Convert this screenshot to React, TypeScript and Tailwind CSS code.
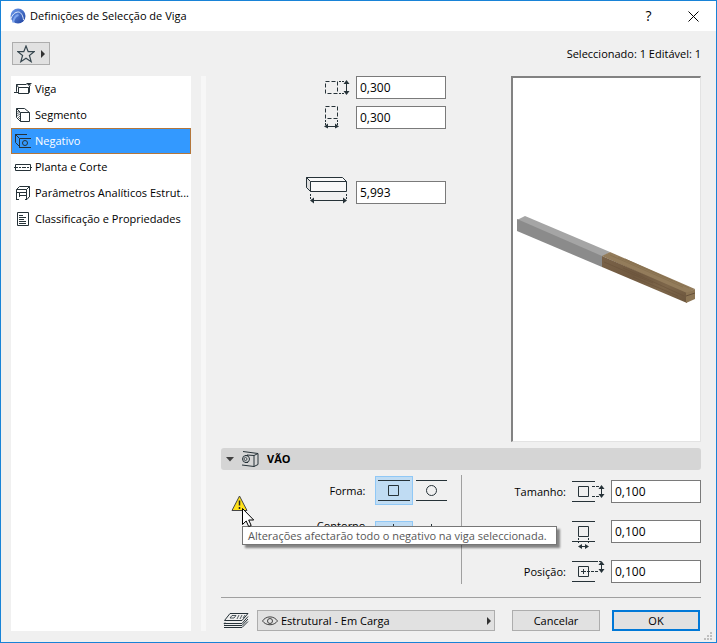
import { useState } from "react";
import type { ReactNode } from "react";

const INK = "#263238";

function Svg({ w, h, className, children }: { w: number; h: number; className?: string; children: ReactNode }) {
    return (
        <svg width={w} height={h} viewBox={`0 0 ${w} ${h}`} fill="none" stroke={INK} className={`shrink-0 ${className ?? ""}`} aria-hidden="true">
            {children}
        </svg>
    );
}

const menu = [
    {
        id: "viga",
        label: "Viga",
        icon: (
            <Svg w={18} h={16}>
                <path d="M4.5 6.5h10v6h-10zM4.5 6.5l-2-3h10M2.5 3.5v7l2 2M0 11.5h3M14.5 6.5l2-2M14.5 12.5l1-1v-6" />
                <path d="M12 2h6l-3 3z" fill={INK} stroke="none" />
            </Svg>
        ),
    },
    {
        id: "segmento",
        label: "Segmento",
        icon: (
            <Svg w={18} h={16}>
                <path d="M6.5 5.5h9v9h-9zM6.5 5.5l-4-4h8l5 4M2.5 1.5v9l4 4" />
                <path d="M3 5l2-1M3 7l3-2M3 9l3-2M4 11l2-2M5 12l1-1" strokeWidth=".7" />
            </Svg>
        ),
    },
    {
        id: "negativo",
        label: "Negativo",
        icon: (
            <Svg w={18} h={16}>
                <path d="M1 1.5h12M5.5 5.5H17M5.5 5.5l-4-4v8l4 4zM5.5 14.5H17M5.5 13v2" />
                <circle cx="11" cy="10" r="2.5" />
            </Svg>
        ),
    },
    {
        id: "planta",
        label: "Planta e Corte",
        icon: (
            <Svg w={18} h={16}>
                <path d="M1.5 5.5h15v6h-15z" />
                <path d="M0 8.5h18" strokeDasharray="4 1 2 1" />
            </Svg>
        ),
    },
    {
        id: "parametros",
        label: "Parâmetros Analíticos Estrut...",
        icon: (
            <Svg w={18} h={16}>
                <path d="M2.5 15V4.5l3-3h10V12M2.5 4.5h10l3-3M5.5 12V7.5h7M12.5 4.5V15M2 14.5h3M11 14.5h2l2-2.5M2.5 7.5h3M5.5 10.5h7" />
            </Svg>
        ),
    },
    {
        id: "classificacao",
        label: "Classificação e Propriedades",
        icon: (
            <Svg w={18} h={16}>
                <path d="M3.5 1.5h11v13h-11zM5 4.5h4M5 6.5h7M5 8.5h5M5 10.5h7M5 12.5h7" />
            </Svg>
        ),
    },
];

const inputClass = "w-[90px] h-[23px] shrink-0 border border-[#7a7a7a] bg-white px-[3px] text-[12px] text-black outline-none";

function SizeField({ label, value, icon }: { label: string; value: string; icon: ReactNode }) {
    return (
        <label className="flex items-center gap-[6px]">
            {icon}
            <input aria-label={label} defaultValue={value} className={inputClass} />
        </label>
    );
}

function HoleField({ label, name, value, icon }: { label: string; name: string; value: string; icon: ReactNode }) {
    return (
        <label className="flex h-[23px] items-center gap-[6px]">
            <span className="flex-1 text-right">{label}</span>
            {icon}
            <input aria-label={name} defaultValue={value} className={inputClass} />
        </label>
    );
}

export default function App() {
    const [active, setActive] = useState("negativo");
    const [shape, setShape] = useState("rect");

    return (
        <div className="flex min-h-screen flex-col border border-[#1883d7] bg-[#f0f0f0] font-['Open_Sans','Noto_Sans',sans-serif] text-[11px] leading-[16px] text-black">
            <header className="flex h-[30px] items-center bg-white pl-2">
                <svg width="17" height="17" viewBox="0 0 17 17" aria-hidden="true">
                    <defs>
                        <linearGradient id="logo" x1="0" y1="0" x2="1" y2="1">
                            <stop offset="0" stopColor="#6d9cf0" />
                            <stop offset="1" stopColor="#1c3f9c" />
                        </linearGradient>
                    </defs>
                    <circle cx="9" cy="8" r="7.5" fill="url(#logo)" />
                    <path d="M1.500 12C3 6.500 6 4 9.500 4C12.500 4.500 14 8 14.500 12" fill="none" stroke="#dfe9fb" strokeWidth="1" />
                    <path d="M4 14.500C5 10 7 7.500 9.500 7" fill="none" stroke="#7ea5ee" strokeWidth="2" />
                </svg>
                <h1 className="ml-1 flex-1">Definições de Selecção de Viga</h1>
                <button aria-label="Ajuda" className="h-full w-[45px] text-[14px]">?</button>
                <button aria-label="Fechar" className="flex h-full w-[45px] items-center justify-center">
                    <svg width="11" height="11" viewBox="0 0 11 11" stroke="#000" aria-hidden="true">
                        <path d="M.5.5l10 10M10.500.5l-10 10" />
                    </svg>
                </button>
            </header>

            <div className="flex h-[45px] items-center justify-between pl-[11px] pr-[15px]">
                <button aria-label="Favoritos" className="flex h-[23px] w-[38px] items-center justify-center gap-[6px] border border-[#adadad] bg-[#e1e1e1]">
                    <Svg w={18} h={18}>
                        <path d="M9 1l2.200 5.700h6l-4.800 3.800 1.800 6.200L9 13.200l-5.200 3.500 1.800-6.200L.8 6.700h6z" stroke="#37474f" strokeWidth="1.2" />
                    </Svg>
                    <Svg w={4} h={8}>
                        <path d="M0 0l4 4-4 4z" fill="#333" stroke="none" />
                    </Svg>
                </button>
                <p>Seleccionado: 1 Editável: 1</p>
            </div>

            <div className="flex flex-1 pb-[11px] pl-[10px] pr-[15px]">
                <nav className="w-[180px] shrink-0 bg-white">
                    {menu.map((item) => (
                        <button
                            key={item.id}
                            onClick={() => setActive(item.id)}
                            className={`flex h-[26px] w-full items-center gap-[3px] border pl-[2px] text-left whitespace-nowrap ${
                                active === item.id ? "border-[#b3763b] bg-[#3399ff] text-white" : "border-transparent"
                            }`}
                        >
                            {item.icon}
                            {item.label}
                        </button>
                    ))}
                </nav>
                <div className="ml-[10px] mr-[15px] w-[5px] shrink-0 bg-[#f7f7f7]" />

                <main className="flex min-w-0 flex-1 flex-col">
                    <section className="flex min-h-[240px] flex-1">
                        <div className="flex flex-1 flex-col items-end pr-[65px]">
                            <SizeField
                                label="Altura"
                                value="0,300"
                                icon={
                                    <Svg w={45} h={23}>
                                        <path d="M20.500 5.500h12v12h-12z" strokeDasharray="4 2" />
                                        <path d="M34 5.500h6M34 17.500h6" strokeDasharray="2 1" />
                                        <path d="M41.500 7v9" />
                                        <path d="M41.500 4l3 4h-6zM41.500 19l3-4h-6z" fill={INK} stroke="none" />
                                    </Svg>
                                }
                            />
                            <div className="mt-[7px]">
                                <SizeField
                                    label="Largura"
                                    value="0,300"
                                    icon={
                                        <Svg w={45} h={23}>
                                            <path d="M20.500.5h12v12h-12z" strokeDasharray="4 2" />
                                            <path d="M20.500 14v6M32.500 14v6" strokeDasharray="2 1" />
                                            <path d="M22 20.500h9" />
                                            <path d="M19 20.500l4-3v5zM34 20.500l-4-3v5z" fill={INK} stroke="none" />
                                        </Svg>
                                    }
                                />
                            </div>
                            <div className="mt-12">
                                <SizeField
                                    label="Comprimento"
                                    value="5,993"
                                    icon={
                                        <Svg w={45} h={31}>
                                            <path d="M1.500.5h36l4 4v10h-36l-4-4z" fill="#f8f8f8" />
                                            <path d="M1.500.5l4 4v10l-4-4z" fill="#ddd" />
                                            <path d="M5.500 4.500h36" />
                                            <path d="M5.500 17v6M41.500 17v6" strokeDasharray="2 1" />
                                            <path d="M7 23.500h33" />
                                            <path d="M5 23.500l4-3v6zM42 23.500l-4-3v6z" fill={INK} stroke="none" />
                                        </Svg>
                                    }
                                />
                            </div>
                        </div>
                        <div className="flex w-[190px] items-center border-t-2 border-l-2 border-t-[#828282] border-l-[#828282] border-r border-b border-r-[#e3e3e3] border-b-[#e3e3e3] bg-white">
                            <svg width="186" height="92" viewBox="0 0 186 92" aria-hidden="true">
                                <defs>
                                    <linearGradient id="wood" x1="0" y1="0" x2="1" y2="1">
                                        <stop offset="0" stopColor="#7a6248" />
                                        <stop offset=".4" stopColor="#705940" />
                                        <stop offset=".7" stopColor="#7d664a" />
                                        <stop offset="1" stopColor="#6b553c" />
                                    </linearGradient>
                                </defs>
                                <path d="M4 6L12 2L97 38L89 43z" fill="#a5a5a5" />
                                <path d="M4 5L89 42V53L4 17z" fill="#8b8b8b" />
                                <path d="M89 42L97 38L182 75L173 80z" fill="#937c5b" />
                                <path d="M89 42L174 79V89L89 53z" fill="url(#wood)" />
                                <path d="M173 79L182 75V85L173 89z" fill="#8c7554" />
                                <path d="M97 41L170 73M105 43L160 67M112 45L176 74" stroke="#86704f" strokeWidth=".8" />
                                <path d="M91 48L140 69M110 54L171 82M120 63L165 82" stroke="#69533a" strokeWidth=".6" />
                                <path d="M173 82L182 79" stroke="#66503a" />
                            </svg>
                        </div>
                    </section>

                    <section>
                        <h2 className="mt-[6px] flex h-[22px] items-center rounded-[3px] bg-[#d5d5d5] font-bold">
                            <Svg w={8} h={5} className="ml-[5px]">
                                <path d="M0 0h8l-4 4.500z" fill="#404040" stroke="none" />
                            </Svg>
                            <Svg w={18} h={16} className="ml-[7px]">
                                <path d="M2 .500L17 2.500v11l-4 2V4.500l4-2M13 4.500L6 4M13 15.500L1 14" />
                                <circle cx="5" cy="8" r="3.500" />
                                <circle cx="4.500" cy="8" r="1.500" strokeWidth=".8" />
                                <path d="M4 4.500h3M4 11.500h3" />
                            </Svg>
                            <span className="ml-2">VÃO</span>
                        </h2>

                        <div className="mt-[5px] flex h-[109px]">
                            <div className="flex flex-1 border-r border-[#a0a0a0]">
                                <div className="relative mt-5 ml-[10px] h-[18px] w-[17px]">
                                    <Svg w={17} h={17}>
                                        <path d="M8.500 1L16 15.500H1z" fill="#ffe11a" stroke="#454545" />
                                        <path d="M8.500 5.500v5M8.500 12v2" stroke="#222" strokeWidth="1.5" />
                                    </Svg>
                                    <div role="tooltip" className="absolute top-[31px] left-[11px] z-10 flex h-[19px] w-[315px] items-center border border-[#767676] bg-white px-[5px] whitespace-nowrap text-[#575757] shadow-[3px_3px_2px_rgba(0,0,0,0.45)]">
                                        Alterações afectarão todo o negativo na viga seleccionada.
                                    </div>
                                    <svg width="13" height="20" viewBox="0 0 13 20" className="absolute top-[13px] left-[11px] z-20" aria-hidden="true">
                                        <path d="M.5.5v16l3.700-3.500 2.500 5.500 2.500-1-2.500-5.500h5z" fill="#fff" stroke="#000" />
                                    </svg>
                                </div>
                                <div className="flex flex-1 flex-col pt-px">
                                    <div className="flex h-[29px] items-center">
                                        <span className="mr-[9px] flex-1 text-right">Forma:</span>
                                        <button
                                            aria-label="Rectangular"
                                            onClick={() => setShape("rect")}
                                            className={`flex h-[29px] w-[38px] items-center justify-center border ${shape === "rect" ? "border-[#90c8f6] bg-[#c0dcf3]" : "border-transparent"}`}
                                        >
                                            <Svg w={32} h={21}>
                                                <path d="M0 .5h32M0 20.500h32M10.500 5.500h10v10h-10z" />
                                            </Svg>
                                        </button>
                                        <button
                                            aria-label="Circular"
                                            onClick={() => setShape("circle")}
                                            className={`flex h-[29px] w-[38px] items-center justify-center border ${shape === "circle" ? "border-[#90c8f6] bg-[#c0dcf3]" : "border-transparent"}`}
                                        >
                                            <Svg w={32} h={21}>
                                                <path d="M0 .5h31M0 20.500h31" />
                                                <circle cx="15.500" cy="10.500" r="5" />
                                            </Svg>
                                        </button>
                                        <span className="w-[10px]" />
                                    </div>
                                    <div className="mt-4 flex h-6 items-center">
                                        <span className="mr-[9px] flex-1 text-right leading-[15px]">
                                            Contorno
                                            <br />
                                            em Planta:
                                        </span>
                                        <button aria-label="Contorno com eixo" className="flex h-6 w-[38px] items-center justify-center border border-[#90c8f6] bg-[#c0dcf3]">
                                            <Svg w={32} h={18}>
                                                <path d="M15.500 0v18" />
                                            </Svg>
                                        </button>
                                        <button aria-label="Contorno simples" className="flex h-6 w-[38px] items-center justify-center border border-transparent">
                                            <Svg w={32} h={18}>
                                                <path d="M15.500 0v18" />
                                            </Svg>
                                        </button>
                                        <span className="w-[10px]" />
                                    </div>
                                </div>
                            </div>

                            <div className="flex flex-1 flex-col gap-[17px] pt-[5px]">
                                <HoleField
                                    label="Tamanho:"
                                    name="Tamanho, altura"
                                    value="0,100"
                                    icon={
                                        <Svg w={33} h={23}>
                                            <path d="M0 1.500h23M0 21.500h23M6.500 6.500h10v10h-10z" />
                                            <path d="M20 6.500h8M20 16.500h8" strokeDasharray="3 1" />
                                            <path d="M29.500 8v7" />
                                            <path d="M29.500 5l3 4h-6zM29.500 18l3-4h-6z" fill={INK} stroke="none" />
                                        </Svg>
                                    }
                                />
                                <HoleField
                                    label=""
                                    name="Tamanho, largura"
                                    value="0,100"
                                    icon={
                                        <Svg w={33} h={35}>
                                            <path d="M0 7.500h23M0 27.500h23M6.500 12.500h10v10h-10z" />
                                            <path d="M6.500 24v6M16.500 24v6" strokeDasharray="2 1" />
                                            <path d="M8 32.500h7" />
                                            <path d="M6 32.500l4-2.500v5zM17 32.500l-4-2.500v5z" fill={INK} stroke="none" />
                                        </Svg>
                                    }
                                />
                                <HoleField
                                    label="Posição:"
                                    name="Posição"
                                    value="0,100"
                                    icon={
                                        <Svg w={33} h={23}>
                                            <path d="M0 1.500h23M0 21.500h23M6.500 6.500h10v10h-10zM9 11.500h5M11.500 9v5" />
                                            <path d="M15 11.500h12M23 1.500h6" strokeDasharray="3 1" />
                                            <path d="M29.500 4v6" />
                                            <path d="M29.500 1l3 4h-6zM29.500 13l3-4h-6z" fill={INK} stroke="none" />
                                        </Svg>
                                    }
                                />
                            </div>
                        </div>
                    </section>

                    <footer className="mt-[13px] flex items-center border-t border-[#a0a0a0] pt-3 pr-px">
                        <Svg w={26} h={17} className="ml-[2px]">
                            <path d="M7 1.500h18L19 8.500H1.500z" />
                            <path d="M9 3.500h4l-2 2.500H7zM16 3l-2 4M19 3l-2 4M22 3l-2 3" strokeWidth=".8" />
                            <path d="M2 10.500L1 11.500h18l6-7M2 13l-1 .5h18l6-6.500M1 15.500h18l6-6" />
                        </Svg>
                        <div className="relative ml-2 min-w-0 flex-1">
                            <Svg w={16} h={10} className="pointer-events-none absolute top-[6px] left-[5px]">
                                <path d="M.5 5C4-.5 12-.5 15.500 5C12 10 4 10 .5 5z" stroke="#444" />
                                <circle cx="8" cy="5" r="2.500" stroke="#444" />
                            </Svg>
                            <select aria-label="Camada" className="block h-[21px] w-full appearance-none border border-[#adadad] bg-[#e1e1e1] pl-[23px] leading-[16px] outline-none">
                                <option>Estrutural - Em Carga</option>
                            </select>
                            <Svg w={4} h={8} className="pointer-events-none absolute top-[7px] right-[4px]">
                                <path d="M0 0l4 4-4 4z" fill="#333" stroke="none" />
                            </Svg>
                        </div>
                        <button className="ml-[17px] h-[21px] w-[88px] border border-[#adadad] bg-[#e1e1e1]">Cancelar</button>
                        <button className="ml-3 h-[21px] w-[88px] border-2 border-[#0078d7] bg-[#e1e1e1]">OK</button>
                    </footer>
                </main>
            </div>

            <svg width="8" height="8" viewBox="0 0 8 8" fill="#bfbfbf" className="absolute right-[5px] bottom-[3px]" aria-hidden="true">
                <path d="M6 0h2v2H6zM3 3h2v2H3zM6 3h2v2H6zM0 6h2v2H0zM3 6h2v2H3zM6 6h2v2H6z" />
            </svg>
        </div>
    );
}
